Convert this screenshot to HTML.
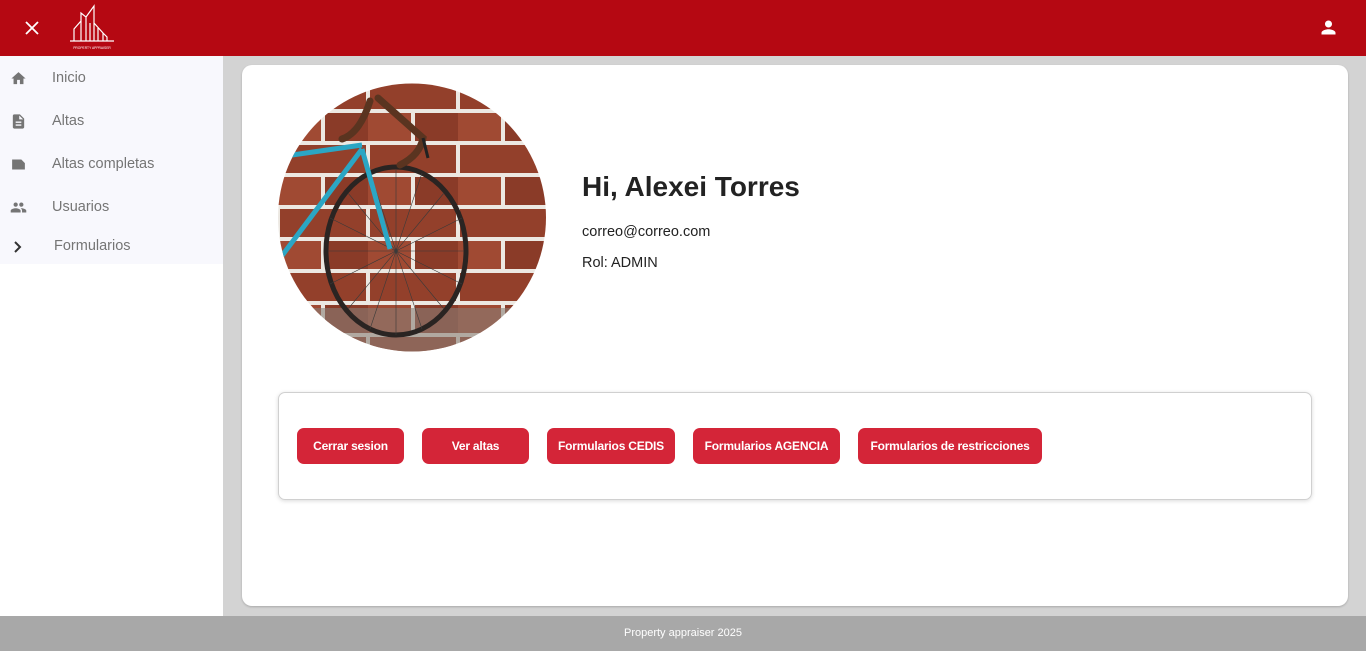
<!DOCTYPE html>
<html><head><meta charset="utf-8"><style>
*{margin:0;padding:0;box-sizing:border-box}
body{width:1366px;height:651px;overflow:hidden;font-family:"Liberation Sans",sans-serif;background:#d3d3d3;position:relative}
.top{position:absolute;left:0;top:0;width:1366px;height:56px;background:#b50812}
.side{position:absolute;left:0;top:56px;width:223px;height:560px;background:#fff}
.menu{background:#f8f8fd;height:208px}
.item{position:absolute;left:0;font-size:14.5px;color:#757575;height:20px;width:223px}
.item span{position:absolute;left:52px;top:1px;white-space:nowrap}
.main{position:absolute;left:242px;top:65px;width:1106px;height:541px;background:#fff;border-radius:10px;box-shadow:0 1px 2px rgba(0,0,0,.2)}
.foot{position:absolute;left:0;top:616px;width:1366px;height:35px;background:#a8a8a8;color:#fff;font-size:11px;text-align:center;line-height:35px}
.card{position:absolute;left:36px;top:327px;width:1034px;height:108px;border:1px solid #d0d0d0;border-radius:7px;box-shadow:0 1px 4px rgba(0,0,0,.15)}
.btn{position:absolute;top:35px;height:36px;background:#d42538;color:#fff;border-radius:7px;font-size:12px;font-weight:bold;line-height:36px;text-align:center;letter-spacing:-0.2px;white-space:nowrap}
</style></head><body>
<div class="top">
<svg style="position:absolute;left:25px;top:21px" width="14" height="14" viewBox="0 0 14 14"><path d="M1 1L13 13M13 1L1 13" stroke="#fff" stroke-width="1.8"/></svg>
<svg style="position:absolute;left:66px;top:3px" width="54" height="48" viewBox="0 0 54 48"><g fill="none" stroke="#fff" stroke-width="1.2"><path d="M8 38V26L15 18V38M15 18L15 10L20 14V38M20 14L28 3V38M24 20V38M28 20L37 30V38M32 25V38M37 30L41 34V38M4 38H48"/></g><text x="26" y="46" font-size="3.3" fill="#fff" text-anchor="middle" font-family="Liberation Sans">PROPERTY APPRAISER</text></svg>
<svg style="position:absolute;left:1318px;top:17px" width="21" height="21" viewBox="0 0 24 24"><path fill="#fff" d="M12 12c2.2 0 4-1.8 4-4s-1.8-4-4-4-4 1.8-4 4 1.8 4 4 4zm0 2c-2.7 0-8 1.3-8 4v2h16v-2c0-2.7-5.3-4-8-4z"/></svg>
</div>
<div class="side"><div class="menu"></div>
<div class="item" style="top:13px"><svg style="position:absolute;left:10px;top:1px" width="17" height="17" viewBox="0 0 24 24"><path fill="#757575" d="M10 20v-6h4v6h5v-8h3L12 3 2 12h3v8z"/></svg><span>Inicio</span></div>
<div class="item" style="top:56px"><svg style="position:absolute;left:10px;top:1px" width="17" height="17" viewBox="0 0 24 24"><path fill="#757575" d="M14 2H6c-1.1 0-2 .9-2 2v16c0 1.1.9 2 2 2h12c1.1 0 2-.9 2-2V8l-6-6zm2 16H8v-2h8v2zm0-4H8v-2h8v2zm-3-5V3.5L18.5 9H13z"/></svg><span>Altas</span></div>
<div class="item" style="top:99px"><svg style="position:absolute;left:10px;top:1px" width="17" height="17" viewBox="0 0 24 24"><path fill="#757575" d="M3 5h13l5 5v9H3z"/></svg><span>Altas completas</span></div>
<div class="item" style="top:142px"><svg style="position:absolute;left:9px;top:1px" width="19" height="17" viewBox="0 0 24 24"><path fill="#757575" d="M16 11c1.7 0 3-1.3 3-3s-1.3-3-3-3-3 1.3-3 3 1.3 3 3 3zm-8 0c1.7 0 3-1.3 3-3S9.7 5 8 5 5 6.3 5 8s1.3 3 3 3zm0 2c-2.3 0-7 1.2-7 3.5V19h14v-2.5C15 14.2 10.3 13 8 13zm8 0c-.3 0-.6 0-1 .1 1.2.8 2 2 2 3.4V19h6v-2.5c0-2.3-4.7-3.5-7-3.5z"/></svg><span>Usuarios</span></div>
<div class="item" style="top:181px"><svg style="position:absolute;left:12px;top:3px" width="12" height="14" viewBox="0 0 12 14"><path d="M3 2l5 5-5 5" stroke="#333" stroke-width="2" fill="none"/></svg><span style="left:54px">Formularios</span></div>
</div>
<div class="main">
<svg style="position:absolute;left:36px;top:18px" width="268" height="269" viewBox="0 0 268 269">
<defs><clipPath id="c"><circle cx="134" cy="134.5" r="134"/></clipPath>
<pattern id="b" width="90" height="64" patternUnits="userSpaceOnUse" patternTransform="translate(0,-4)"><rect width="90" height="64" fill="#ece8e2"/><rect x="2" y="2" width="86" height="28" fill="#93402b"/><rect x="-43" y="34" width="86" height="28" fill="#a04a33"/><rect x="47" y="34" width="86" height="28" fill="#8a3b28"/></pattern></defs>
<g clip-path="url(#c)"><rect width="268" height="269" fill="url(#b)"/>
<rect y="225" width="268" height="50" fill="#8a7f76" opacity=".6"/>
<ellipse cx="118" cy="168" rx="70" ry="84" fill="none" stroke="#2a2422" stroke-width="5"/>
<g stroke="#3a3a3a" stroke-width=".6"><path d="M118 86V252M50 168H186M70 110L166 226M166 110L70 226M92 90L144 246M144 90L92 246M52 135L184 201M184 135L52 201"/></g>
<g stroke="#2ba6c4" stroke-width="5" fill="none"><path d="M84 66L112 166M84 66L0 178M0 74L84 62"/></g>
<g stroke="#5a3420" stroke-width="7" fill="none" stroke-linecap="round"><path d="M92 18Q82 50 64 56M100 15L145 55Q142 72 122 82"/></g>
<path d="M145 55l5 20" stroke="#222" stroke-width="3"/>
</g></svg>
<div style="position:absolute;left:340px;top:106px;font-size:28px;font-weight:bold;color:#222">Hi, Alexei Torres</div>
<div style="position:absolute;left:340px;top:159px;font-size:14.5px;color:#222">correo@correo.com</div>
<div style="position:absolute;left:340px;top:190px;font-size:14.5px;color:#222">Rol: ADMIN</div>
<div class="card">
<div class="btn" style="left:18px;width:107px">Cerrar sesion</div>
<div class="btn" style="left:143px;width:107px">Ver altas</div>
<div class="btn" style="left:268px;width:128px">Formularios CEDIS</div>
<div class="btn" style="left:414px;width:147px">Formularios AGENCIA</div>
<div class="btn" style="left:579px;width:184px">Formularios de restricciones</div>
</div>
</div>
<div class="foot">Property appraiser 2025</div>
</body></html>
